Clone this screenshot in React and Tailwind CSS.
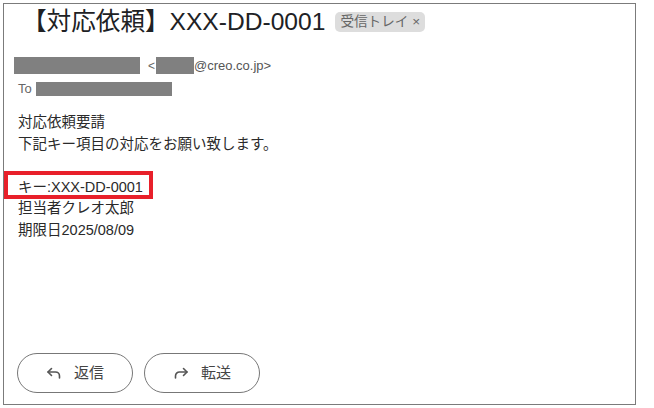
import React from "react";

const font = { fontFamily: '"Liberation Sans", "Noto Sans CJK JP", sans-serif' };

function ReplyIcon() {
  return (
    <svg width="16" height="14" viewBox="0 0 16 14" fill="none" stroke="#555" strokeWidth="1.6" strokeLinecap="round" strokeLinejoin="round">
      <path d="M5.5 2.5 L2 6 L5.5 9.5" />
      <path d="M2 6 H9.5 a4 4 0 0 1 4 4 v2" />
    </svg>
  );
}

function ForwardIcon() {
  return (
    <svg width="16" height="14" viewBox="0 0 16 14" fill="none" stroke="#555" strokeWidth="1.6" strokeLinecap="round" strokeLinejoin="round">
      <path d="M10.5 2.5 L14 6 L10.5 9.5" />
      <path d="M14 6 H6.5 a4 4 0 0 0 -4 4 v2" />
    </svg>
  );
}

export default function App() {
  return (
    <div className="w-[654px] h-[408px] bg-white pt-[3px] pl-[3px]" style={font}>
      <div className="w-[633px] h-[402px] border border-[#7b7b7b] flex flex-col">
        <div className="flex items-center pl-[18px] pt-[3px] h-[32px]">
          <span className="text-[24.6px] leading-[30px] text-[#202124]">【対応依頼】XXX-DD-0001</span>
          <span className="ml-[10px] bg-[#dddddd] text-[#666] text-[13.6px] leading-[20px] px-[5px] rounded-[5px]">受信トレイ ×</span>
        </div>
        <div className="flex items-center mt-[21px] pl-[10px] h-[17px]">
          <span className="w-[126px] h-[17px] bg-[#808080]"></span>
          <span className="ml-[8px] text-[12px] text-[#666]">&lt;</span>
          <span className="ml-[1px] w-[38px] h-[17px] bg-[#808080]"></span>
          <span className="text-[13px] text-[#555]">@creo.co.jp&gt;</span>
        </div>
        <div className="flex items-center mt-[8px] pl-[14px] h-[14px]">
          <span className="text-[13px] text-[#666]">To</span>
          <span className="ml-[4px] w-[136px] h-[14px] bg-[#808080]"></span>
        </div>
        <div className="mt-[16px] pl-[14px] text-[14.5px] leading-[21.5px] text-[#2a2a2a]">
          <div>対応依頼要請</div>
          <div>下記キー項目の対応をお願い致します。</div>
          <div className="h-[21.5px]"></div>
          <div className="relative">
            キー:XXX-DD-0001
            <span className="absolute left-[-14px] top-[-6px] w-[149px] h-[28px] border-[4px] border-[#e8202a]"></span>
          </div>
          <div>担当者クレオ太郎</div>
          <div>期限日2025/08/09</div>
        </div>
        <div className="mt-auto mb-[11px] pl-[13px] flex gap-[11px]">
          <button className="w-[116px] h-[40px] rounded-full border border-[#777] flex items-center justify-center gap-[12px] text-[15px] text-[#444]">
            <ReplyIcon />
            <span>返信</span>
          </button>
          <button className="w-[116px] h-[40px] rounded-full border border-[#777] flex items-center justify-center gap-[12px] text-[15px] text-[#444]">
            <ForwardIcon />
            <span>転送</span>
          </button>
        </div>
      </div>
    </div>
  );
}
